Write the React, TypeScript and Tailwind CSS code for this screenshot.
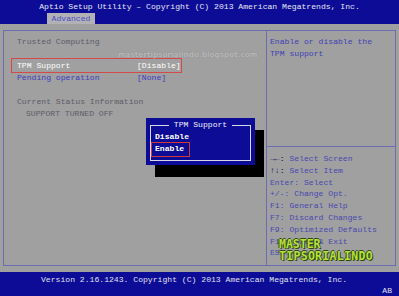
const mono = "font-['Liberation_Mono','DejaVu_Sans_Mono',monospace]";

const helpLines: [string, string][] = [
  ['→←:', ' Select Screen'],
  ['↑↓:', ' Select Item'],
  ['Enter:', ' Select'],
  ['+/-:', ' Change Opt.'],
  ['F1:', ' General Help'],
  ['F7:', ' Discard Changes'],
  ['F9:', ' Optimized Defaults'],
  ['F10:', ' Save & Exit'],
  ['ESC:', ' Exit'],
];

function SetupRow({ label, value, tone }: { label: string; value: string; tone: string }) {
  return (
    <div className={`flex h-[12px] leading-[12px] ${tone}`}>
      <span className="w-[120px] whitespace-pre">{label}</span>
      <span className="whitespace-pre">{value}</span>
    </div>
  );
}

function Popup() {
  return (
    <>
      {/* drop shadow */}
      <div className="absolute left-[155px] top-[130px] w-[109px] h-[47px] bg-black" />
      <div className="absolute left-[146px] top-[118px] w-[109px] h-[47px] bg-[#0c0c96]">
        <div className="absolute left-[4px] right-[4px] top-[7px] bottom-[4px] border border-[#d8d8e8]" />
        <div className="absolute left-0 right-0 top-[1px] flex justify-center">
          <span className="bg-[#0c0c96] px-[5px] leading-[12px] text-[#f0f0f8]">TPM Support</span>
        </div>
        <div className="absolute left-[9px] top-[13px] leading-[12px] text-white font-bold">Disable</div>
        <div className="absolute left-[9px] top-[25px] leading-[12px] text-white font-bold">Enable</div>
        <div className="absolute left-[5px] top-[24px] w-[39px] h-[15px] border border-[#d03838]" />
      </div>
    </>
  );
}

export default function App() {
  return (
    <div
      className={`relative w-[399px] h-[296px] overflow-hidden bg-[#a0a0a0] flex flex-col text-[8.1px] ${mono}`}
    >
      <header className="h-[24px] bg-[#0c0c96] flex flex-col">
        <div className="h-[13px] leading-[14px] text-center text-[#e8e8f2] whitespace-pre">
          Aptio Setup Utility – Copyright (C) 2013 American Megatrends, Inc.
        </div>
        <div className="h-[11px] pl-[47px] flex">
          <div className="w-[48px] bg-[#b2b2b6] text-[#4c4cc4] text-center leading-[12px]">Advanced</div>
        </div>
      </header>

      <main className="h-[248px] px-[3px] py-[6px]">
        <div className="h-[236px] border border-[#6c6cb0] flex">
          <section className="relative w-[263px] border-r border-[#6c6cb0] pl-[13px] pt-[5px]">
            <div className="h-[12px] leading-[12px] text-[#5c5c68]">Trusted Computing</div>
            <div className="h-[12px]" />
            <SetupRow label="TPM Support" value="[Disable]" tone="text-white" />
            <SetupRow label="Pending operation" value="[None]" tone="text-[#3c3cc4]" />
            <div className="h-[12px]" />
            <div className="h-[12px] leading-[12px] text-[#5c5c68]">Current Status Information</div>
            <div className="h-[12px] leading-[12px] text-[#5c5c68] pl-[9px]">SUPPORT TURNED OFF</div>
            <div className="absolute left-[7px] top-[27px] w-[171px] h-[15px] border border-[#d44a4a]" />
          </section>

          <section className="flex-1 flex flex-col">
            <div className="h-[116px] border-b border-[#6c6cb0] pl-[3px] pt-[5px] text-[#4040b4] leading-[12px]">
              <div>Enable or disable the</div>
              <div>TPM support</div>
            </div>
            <div className="pl-[3px] pt-[6px]">
              {helpLines.map(([key, text]) => (
                <div key={key} className="h-[11.8px] leading-[12px] whitespace-pre">
                  <span className={key.length <= 3 && !key.startsWith('F') ? 'text-[#1a1a5c] font-bold' : 'text-[#4848b0]'}>
                    {key}
                  </span>
                  <span className="text-[#4848b0]">{text}</span>
                </div>
              ))}
            </div>
          </section>
        </div>
      </main>

      <footer className="h-[24px] bg-[#0c0c96] flex flex-col text-[#e0e0ee]">
        <div className="h-[14px] leading-[16px] pl-[41px] whitespace-pre">
          Version 2.16.1243. Copyright (C) 2013 American Megatrends, Inc.
        </div>
        <div className="flex justify-end pr-[7px] leading-[10px]">AB</div>
      </footer>

      <Popup />

      {/* blog watermark */}
      <div className="absolute left-[118px] top-[50px] text-[7.3px] font-bold text-[#b6b6b6] [text-shadow:0_0_1px_#8a8a8a] font-['DejaVu_Sans',sans-serif]">
        mastertipsorialindo.blogspot.com
      </div>

      {/* logo */}
      <div className="absolute left-[279px] top-[238px] flex flex-col font-['DejaVu_Sans_Mono',monospace] font-bold text-[#b8e03c] leading-[12px] text-[11.5px] [text-shadow:1px_1px_0_#2f4a10,-1px_0_0_#2f4a10,0_-1px_0_#2f4a10]">
        <span>MASTER</span>
        <span className="tracking-[0.3px]">TIPSORIALINDO</span>
      </div>
    </div>
  );
}
